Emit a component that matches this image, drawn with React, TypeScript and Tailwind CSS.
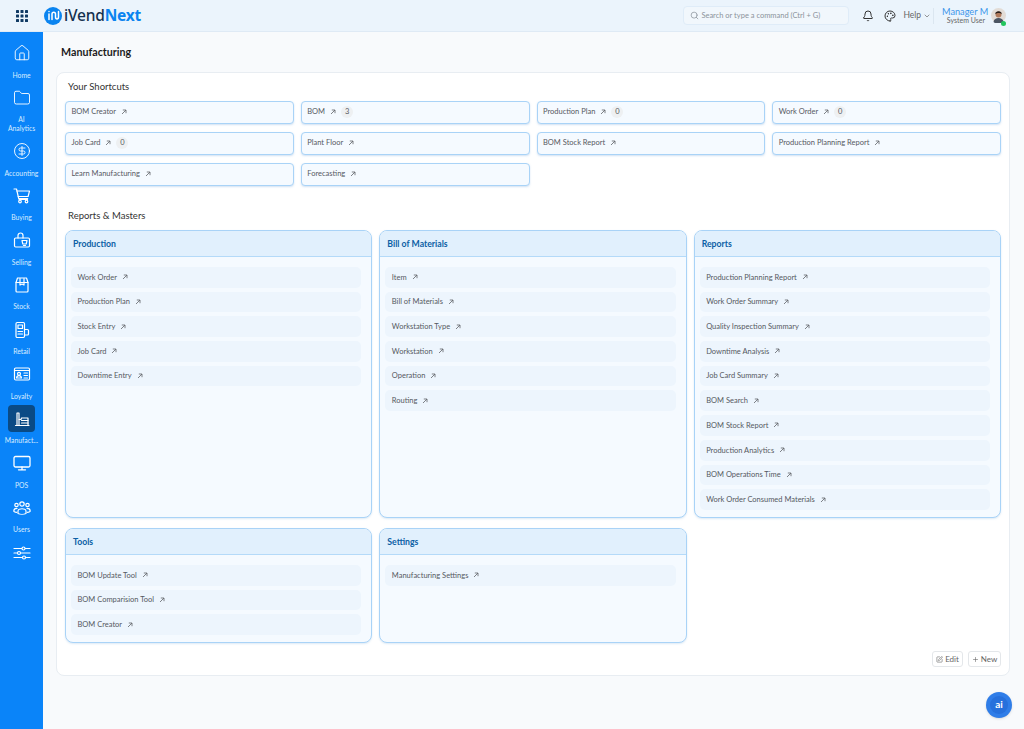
import { Bell, ChevronDown, Search, Palette, House, Folder, CircleDollarSign, Plus, SquarePen } from "lucide-react";
import type { ReactNode } from "react";

const shortcuts: [string, string?][] = [
  ["BOM Creator"], ["BOM", "3"], ["Production Plan", "0"], ["Work Order", "0"],
  ["Job Card", "0"], ["Plant Floor"], ["BOM Stock Report"], ["Production Planning Report"],
  ["Learn Manufacturing"], ["Forecasting"],
];

function S({ children }: { children: ReactNode }) {
  return (
    <svg width="18" height="18" viewBox="0 0 18 18" fill="none" stroke="currentColor" strokeWidth="1.2" strokeLinecap="round" strokeLinejoin="round">
      {children}
    </svg>
  );
}

const Cart = () => <S><path d="M1 2h2.500l2.200 9.500h9" /><path d="M4 4h12.500l-1.400 5.500H5.200" /><circle cx="7" cy="14.500" r="1.300" /><circle cx="13.500" cy="14.500" r="1.300" /><path d="M6 12.500h8.500" /></S>;
const Selling = () => <S><rect x="1.500" y="7" width="15" height="9" rx="1.200" /><path d="M5 7V4.500a2.500 2.500 0 0 1 5 0V7" /><path d="M9 9.500h5l-.8 3.500H9.800z" /><path d="M10.500 14.500h2" /></S>;
const Stock = () => <S><path d="M3 6.500 4.500 2h9L15 6.500V15a1 1 0 0 1-1 1H4a1 1 0 0 1-1-1z" /><path d="M3 6.500h12" /><path d="M7 2.500v6.500l2-1 2 1V2.500" /></S>;
const Retail = () => <S><rect x="3" y="1.500" width="8.500" height="15" rx="1.200" /><rect x="5" y="4" width="4.500" height="3.500" /><path d="M11.500 8.500h3a1 1 0 0 1 1 1v3.500a1 1 0 0 1-1 1h-3" /><path d="M5 10.500h4.500M5 13h4.500" /></S>;
const Loyalty = () => <S><rect x="1.500" y="3" width="15" height="12" rx="1.200" /><path d="M1.500 5.500h15" /><circle cx="6" cy="8.800" r="1.500" /><path d="M3.500 13c.3-1.700 1.200-2.300 2.500-2.300s2.200.6 2.500 2.300z" /><path d="M11 8h3.500M11 10.500h3.500M11 13h3.500" /></S>;
const Mfg = () => <S><path d="M4 15.500V3h2v12.500" /><path d="M6 9.500h2l.5-1.500h6.500v7.500" /><path d="M2.500 15.500h13.500" /><path d="M8.500 10.500h6.500M8.500 13h6.500" /></S>;
const Pos = () => <svg width="18" height="18" viewBox="0 0 18 18" fill="none" stroke="currentColor" strokeWidth="1.300" strokeLinecap="round"><rect x="1" y="2.500" width="16" height="10.500" rx="1.500" /><path d="M9 13v2.500M5.500 15.800h7" /></svg>;
const People = () => <S><circle cx="9" cy="5" r="2.200" /><circle cx="3.500" cy="6" r="1.700" /><circle cx="14.500" cy="6" r="1.700" /><path d="M5 14.500v-2.200c0-3.400 8-3.400 8 0v2.200c-2 1-6 1-8 0z" /><path d="M4 9.300c-1.800 0-3.200 1-3.200 2.700 0 .8 1.200 1.200 3 1.300M14 9.300c1.800 0 3.200 1 3.200 2.700 0 .8-1.200 1.200-3 1.300" /></S>;
const Sliders = () => <S><path d="M1 4.500h16M1 9h16M1 13.500h16" /><circle cx="10.500" cy="4.500" r="1.500" fill="#0a84f9" /><circle cx="6" cy="9" r="1.500" fill="#0a84f9" /><circle cx="11" cy="13.500" r="1.500" fill="#0a84f9" /></S>;

const side: [ReactNode, string, boolean?][] = [
  [<House size={18} strokeWidth={1.2} />, "Home"],
  [<Folder size={18} strokeWidth={1.2} />, "AI Analytics"],
  [<CircleDollarSign size={18} strokeWidth={1.2} />, "Accounting"],
  [<Cart />, "Buying"],
  [<Selling />, "Selling"],
  [<Stock />, "Stock"],
  [<Retail />, "Retail"],
  [<Loyalty />, "Loyalty"],
  [<Mfg />, "Manufact...", true],
  [<Pos />, "POS"],
  [<People />, "Users"],
];

function Arrow() {
  return (
    <svg width="6" height="6" viewBox="0 0 6 6" fill="none" stroke="#5f6368" strokeWidth="0.8" className="shrink-0">
      <path d="M1 5 5 1M1.800 1H5v3.200" />
    </svg>
  );
}

function Panel({ title, items }: { title: string; items: string[] }) {
  return (
    <div className="h-full rounded-[8px] border border-[#a9d3f7] bg-[#f5faff] overflow-hidden shadow-[0_1px_2px_rgba(120,170,220,0.25)]">
      <div className="h-[26px] pt-[1px] bg-[#e1f0fd] border-b border-[#b4daf9] px-[7px] flex items-center text-[8.700px] font-bold text-[#0b5fa5]">{title}</div>
      <div className="pl-[5px] pr-[10px] pt-[10px] flex flex-col gap-[4px]">
        {items.map((t) => (
          <div key={t} className="h-[20.700px] rounded-[5px] bg-[#edf5fd] pl-[6.500px] flex items-center gap-[5px] text-[7.500px] text-[#55595f]">
            <span>{t}</span>
            <Arrow />
          </div>
        ))}
      </div>
    </div>
  );
}

export default function App() {
  return (
    <div className="h-[729px] w-[1024px] overflow-hidden bg-[#f8fafc] flex flex-col relative" style={{ fontFamily: 'Lato, "Noto Sans", sans-serif' }}>
      <header className="h-[32px] shrink-0 bg-[#ebf4fc] border-b border-[#dfeaf5] flex items-center">
        <svg width="12" height="12" viewBox="0 0 12 12" fill="#103a63" className="ml-[16px]">
          {[0, 4.500, 9].flatMap((y) => [0, 4.500, 9].map((x) => <rect key={`${x}-${y}`} x={x} y={y} width="3" height="3" rx="0.6" />))}
        </svg>
        <div className="ml-[16px] w-[18px] h-[18px] rounded-full bg-[#0a84f0] flex items-center justify-center">
          <svg width="13" height="11" viewBox="0 0 13 11" fill="none" stroke="white" strokeWidth="1.500" strokeLinecap="round"><path d="M2 4v5.500" /><path d="M2 1.500h0" /><path d="M5 9.500V4c0-2.500 3.500-2.500 3.500 0v3c0 2.500 3 2.500 3 0V1.500" /></svg>
        </div>
        <div className="ml-[2px] text-[15.500px] font-medium text-[#14304e] font-['Noto_Sans'] tracking-[-0.2px]">iVend<span className="text-[#0a84f0] font-bold">Next</span></div>
        <div className="ml-auto w-[166px] h-[19px] rounded-[4px] border border-[#dfecf8] bg-[#f1f7fc] flex items-center pl-[6px] gap-[2px] text-[7.500px] text-[#8b939b] whitespace-nowrap">
          <Search size={9} /> Search or type a command (Ctrl + G)
        </div>
        <Bell size={12} className="ml-[13px] text-[#333]" />
        <Palette size={12} className="ml-[10px] text-[#333]" />
        <div className="ml-[7px] text-[8.500px] text-[#666] flex items-center gap-[2px]">Help <ChevronDown size={8} /></div>
        <div className="ml-[2px] h-[16px] w-px bg-[#dbe6f0]" />
        <div className="ml-[8px] text-right leading-none w-[43px] whitespace-nowrap">
          <div className="text-[9.200px] text-[#3d95ea]">Manager M</div>
          <div className="text-[7px] text-[#666] mt-[1px]">System User</div>
        </div>
        <div className="relative ml-[6px] mr-[18px] w-[15px] h-[15px]">
          <svg width="15" height="15" viewBox="0 0 15 15"><circle cx="7.500" cy="7.500" r="7.500" fill="#e2dcd6" /><path d="M2.500 14c.5-3 2.500-4 5-4s4.500 1 5 4a7.500 7.500 0 0 1-10 0z" fill="#4b5563" /><circle cx="7.500" cy="6.500" r="3" fill="#b0795a" /><path d="M4.300 6C4 2.500 11 2.200 10.700 6 9.500 4.500 6 4.500 4.300 6z" fill="#2b211c" /></svg>
          <span className="absolute right-0 -bottom-[3px] w-[5px] h-[5px] rounded-full bg-[#22c55e]" />
        </div>
      </header>
      <div className="flex flex-1 min-h-0">
        <aside className="w-[43px] shrink-0 bg-[#0a84f9] flex flex-col items-center pt-[12px] text-white">
          {side.map(([icon, label, active]) => (
            <div key={label} className="w-full flex flex-col items-center pb-[4px] relative">
              {active && <div className="absolute left-[8px] top-[-5px] w-[27px] h-[27px] rounded-[4px] bg-[#0a4a85]" />}
              <div className="relative h-[18px] flex items-center">{icon}</div>
              <div className="relative mt-[8.500px] text-[6.800px] leading-[9px] text-center text-[#d8ecff] w-[34px] whitespace-pre-line overflow-visible">
                <span className="block w-[42px] -mx-[4px]">{label === "AI Analytics" ? "AI\nAnalytics" : label}</span>
              </div>
              <div className="h-[5.100px]" />
            </div>
          ))}
          <Sliders />
        </aside>
        <main className="flex-1 min-w-0 pl-[13px] pr-[14px]">
          <h1 className="pl-[5px] h-[40px] flex items-center text-[10.700px] font-bold text-[#1c1c1c]">Manufacturing</h1>
          <div className="h-[604px] rounded-[8px] border border-[#e8edf2] bg-white px-[8px] relative">
            <div className="pl-[3px] pt-[7px] text-[9.500px] text-[#333] h-[28px]">Your Shortcuts</div>
            <div className="grid grid-cols-4 gap-x-[7px] gap-y-[8px]">
              {shortcuts.map(([t, n]) => (
                <div key={t} className="h-[23px] rounded-[4px] border border-[#a9d3f7] bg-[#f5faff] pl-[5.500px] pb-[1px] flex items-center gap-[5px] text-[7.500px] text-[#55595f] shadow-[0_1px_2px_rgba(120,170,220,0.35)]">
                  <span>{t}</span>
                  <Arrow />
                  {n && <span className="w-[12px] h-[12px] rounded-full bg-[#eef0f2] flex items-center justify-center text-[7.500px]">{n}</span>}
                </div>
              ))}
            </div>
            <div className="pl-[3px] mt-[23px] text-[9.500px] text-[#333] h-[21px]">Reports &amp; Masters</div>
            <div className="grid grid-cols-3 gap-x-[7px] gap-y-[10px] grid-rows-[288px_115px]">
              <Panel title="Production" items={["Work Order", "Production Plan", "Stock Entry", "Job Card", "Downtime Entry"]} />
              <Panel title="Bill of Materials" items={["Item", "Bill of Materials", "Workstation Type", "Workstation", "Operation", "Routing"]} />
              <Panel title="Reports" items={["Production Planning Report", "Work Order Summary", "Quality Inspection Summary", "Downtime Analysis", "Job Card Summary", "BOM Search", "BOM Stock Report", "Production Analytics", "BOM Operations Time", "Work Order Consumed Materials"]} />
              <Panel title="Tools" items={["BOM Update Tool", "BOM Comparision Tool", "BOM Creator"]} />
              <Panel title="Settings" items={["Manufacturing Settings"]} />
            </div>
            <div className="flex justify-end gap-[5px] mt-[8px]">
              <div className="h-[16px] w-[31px] rounded-[3px] border border-[#e4e7ea] flex items-center justify-center gap-[2px] text-[8px] text-[#666]"><SquarePen size={7} />Edit</div>
              <div className="h-[16px] w-[33px] rounded-[3px] border border-[#e4e7ea] flex items-center justify-center gap-[2px] text-[8px] text-[#666]"><Plus size={7} />New</div>
            </div>
          </div>
        </main>
      </div>
      <div className="absolute left-[986px] top-[692px] w-[26px] h-[26px] rounded-full bg-[#2f7de8] shadow flex items-center justify-center">
        <span className="w-[18px] h-[18px] rounded-full bg-[#2670dc] flex items-center justify-center text-white text-[10px] font-bold leading-none pb-[2px]">ai</span>
      </div>
    </div>
  );
}
